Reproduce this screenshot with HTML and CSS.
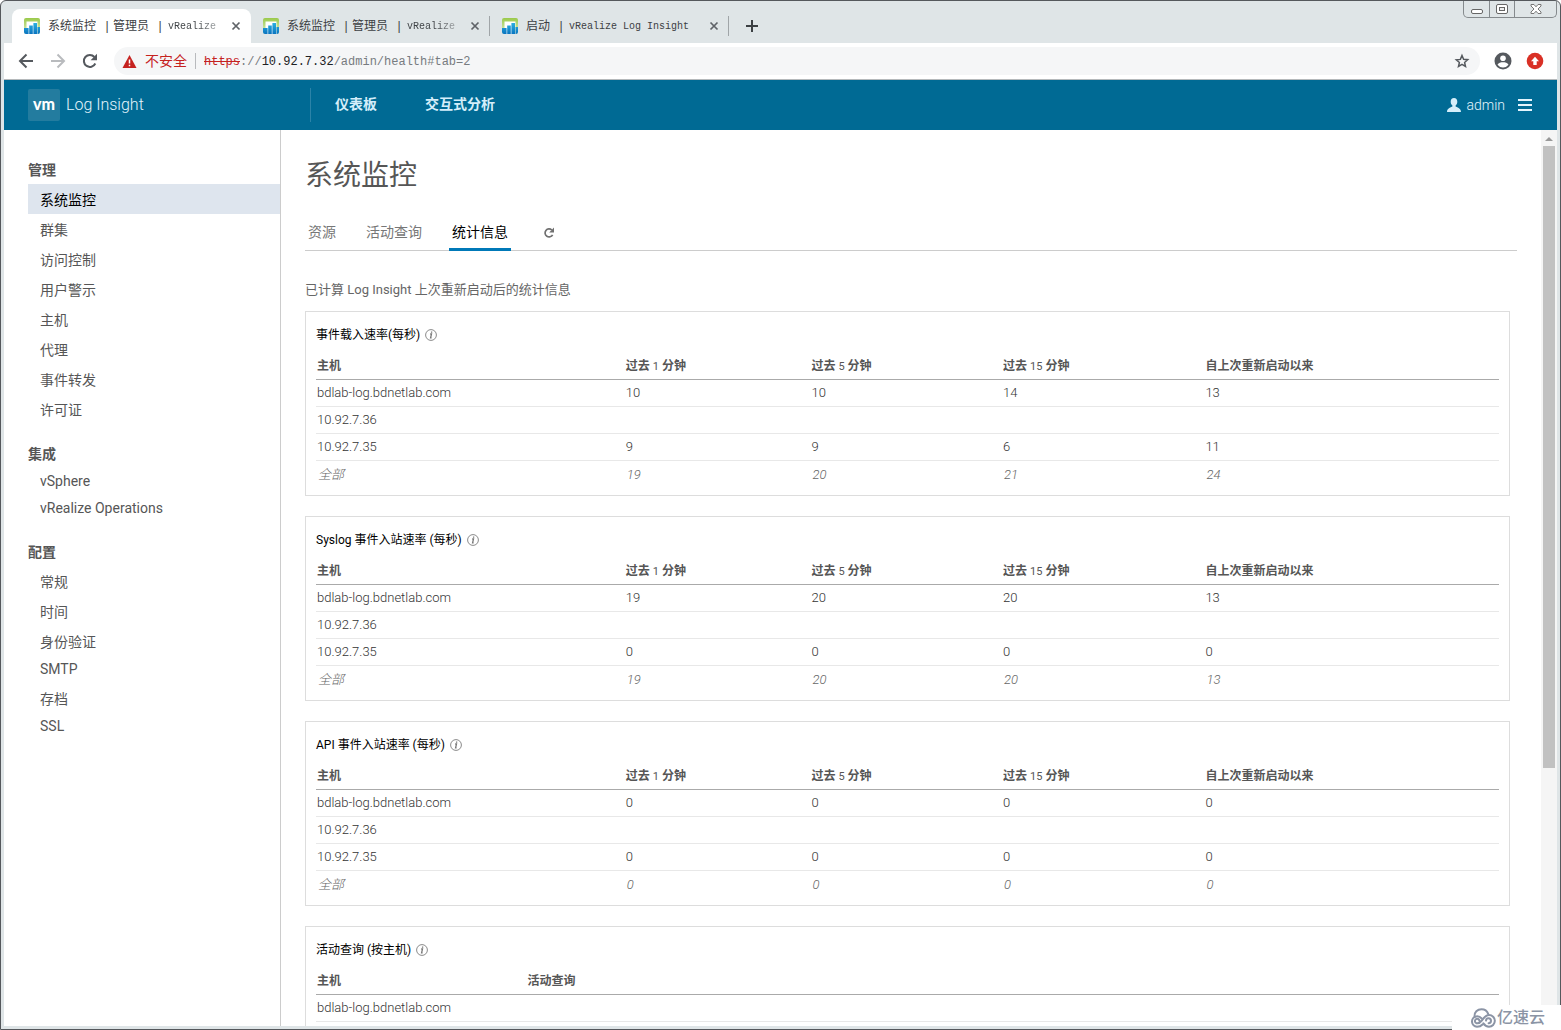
FILE: index.html
```html
<!DOCTYPE html>
<html lang="zh-CN">
<head>
<meta charset="utf-8">
<title>系统监控 | 管理员 | vRealize Log Insight</title>
<link rel="stylesheet" href="styles.css">
</head>
<body>
<svg class="defs" aria-hidden="true">
  <defs>
    <linearGradient id="green" x1="0" y1="0" x2="0" y2="1"><stop offset="0" stop-color="#9ac94a"/><stop offset="1" stop-color="#e3f0cc"/></linearGradient>
    <linearGradient id="blue" x1="0" y1="0" x2="0" y2="1"><stop offset="0" stop-color="#2bb0e0"/><stop offset="1" stop-color="#0a74c0"/></linearGradient>
    <symbol id="favicon" viewBox="0 0 16 16">
      <rect x="0" y="0" width="16" height="16" rx="2" fill="url(#green)"/>
      <path d="M2.500 3.500h11V16h-11z" fill="#fff"/>
      <path d="M0 10h4.600v6H2a2 2 0 0 1-2-2zM5.200 7.500h3.600V16H5.200zM9.400 5h3.600v11H9.400zM13.500 9H16v5a2 2 0 0 1-2 2h-.5z" fill="url(#blue)"/>
    </symbol>
    <symbol id="close" viewBox="0 0 10 10"><path d="M1.500 1.500l7 7M8.500 1.500l-7 7" stroke="#5f6368" stroke-width="1.700" fill="none"/></symbol>
    <symbol id="info" viewBox="0 0 12 12">
      <circle cx="6" cy="6" r="5.400" fill="none" stroke="#8a8a8a"/>
      <path d="M5.200 5h1.300l-.9 3.800h1M6.600 2.600v1.200" fill="none" stroke="#777" stroke-width="1.300"/>
    </symbol>
  </defs>
</svg>
<div class="window">
  <div class="tabstrip">
    <div class="tab active"><svg class="fav"><use href="#favicon"/></svg><span class="tab-title">系统监控<i>|</i>管理员<i>|</i><b>vRealize</b></span><button class="tab-close" aria-label="关闭"><svg><use href="#close"/></svg></button></div>
    <div class="tab"><svg class="fav"><use href="#favicon"/></svg><span class="tab-title">系统监控<i>|</i>管理员<i>|</i><b>vRealize</b></span><button class="tab-close" aria-label="关闭"><svg><use href="#close"/></svg></button></div>
    <div class="tab"><svg class="fav"><use href="#favicon"/></svg><span class="tab-title">启动<i>|</i><b class="full">vRealize Log Insight</b></span><button class="tab-close" aria-label="关闭"><svg><use href="#close"/></svg></button></div>
    <button class="new-tab" aria-label="新标签页"><svg viewBox="0 0 12 12"><path d="M6 0v12M0 6h12" stroke="#3c4043" stroke-width="2"/></svg></button>
    <div class="controls">
      <button class="ctl" aria-label="最小化"><svg viewBox="0 0 24 16"><rect x="6.500" y="8.500" width="11" height="4" rx="1.500" fill="#fff" stroke="#666"/></svg></button>
      <button class="ctl" aria-label="最大化"><svg viewBox="0 0 24 16"><rect x="6.500" y="3.500" width="11" height="9" rx="1.500" fill="#fff" stroke="#666"/><rect x="9.500" y="6.500" width="5" height="3" fill="#eee" stroke="#666"/></svg></button>
      <button class="ctl wide" aria-label="关闭窗口"><svg viewBox="0 0 24 16"><path d="M7 3.500h3l2 2.300 2-2.300h3v1.500L14 8l3 3v1.500h-3l-2-2.300-2 2.300H7V11l3-3-3-3z" fill="#fff" stroke="#777"/></svg></button>
    </div>
  </div>
  <div class="toolbar">
    <button class="tool" aria-label="后退"><svg viewBox="0 0 16 16"><path d="M15 8H2M8.500 1.500L2 8l6.500 6.500" fill="none" stroke="#55595e" stroke-width="2"/></svg></button>
    <button class="tool" aria-label="前进"><svg viewBox="0 0 16 16"><path d="M1 8h13M7.500 1.500L14 8l-6.500 6.500" fill="none" stroke="#b9bbbe" stroke-width="2"/></svg></button>
    <button class="tool" aria-label="刷新"><svg viewBox="0 0 16 16"><path d="M13.300 10.500A6 6 0 1 1 12.400 4" fill="none" stroke="#55595e" stroke-width="2"/><path d="M15 .8v6.400H8.600z" fill="#55595e"/></svg></button>
    <div class="address">
      <svg class="warn" viewBox="0 0 14 13"><path d="M7 0l7 13H0z" fill="#c5221f"/><path d="M7 4.500v4M7 9.700v1.600" stroke="#fff" stroke-width="1.500"/></svg>
      <span class="unsafe">不安全</span>
      <span class="url"><s>https</s>://<strong>10.92.7.32</strong>/admin/health#tab=2</span>
      <button class="star" aria-label="收藏"><svg viewBox="0 0 16 16"><path d="M8 2.500l1.600 3.800 4.100.4-3.100 2.700.9 4L8 11.400l-3.500 2.100.9-4-3.100-2.700 4.100-.4z" fill="none" stroke="#55595e" stroke-width="1.500"/></svg></button>
    </div>
    <div class="profile">
      <button aria-label="用户"><svg viewBox="0 0 18 18"><circle cx="9" cy="9" r="8.500" fill="#55595e"/><circle cx="9" cy="6.300" r="2.800" fill="#fff"/><path d="M3.500 12.800c1-2 3.300-2.600 5.500-2.600s4.500.6 5.500 2.600A6.700 6.700 0 0 1 9 15.500a6.700 6.700 0 0 1-5.500-2.700z" fill="#fff"/></svg></button>
      <button aria-label="更新"><svg viewBox="0 0 18 18"><circle cx="9" cy="9" r="8.300" fill="#d93025"/><path d="M9 4.800l4 4.400h-2.300V13H7.300V9.200H5z" fill="#fff"/></svg></button>
    </div>
  </div>
  <header class="app-header">
    <a class="brand" href="#"><span class="vm">vm</span><span>Log Insight</span></a>
    <nav class="top-nav"><a href="#">仪表板</a><a href="#">交互式分析</a></nav>
    <a class="user" href="#"><svg viewBox="0 0 14 14"><path d="M7 0c2.200 0 3.300 1.600 3.300 3.700 0 1.700-.7 3-1.700 3.700v1.200c1 .8 5.400 1.400 5.400 5.400H0c0-4 4.400-4.600 5.400-5.400V7.400c-1-.7-1.700-2-1.700-3.700C3.700 1.600 4.800 0 7 0z" fill="#d5eefa"/></svg><span>admin</span></a>
    <button class="menu" aria-label="菜单"><svg viewBox="0 0 14 12"><path d="M0 1h14M0 6h14M0 11h14" stroke="#e4f5fd" stroke-width="2"/></svg></button>
  </header>
  <div class="workspace">
    <aside class="sidebar">
      <h2>管理</h2>
      <ul>
        <li><a class="current" href="#">系统监控</a></li><li><a href="#">群集</a></li><li><a href="#">访问控制</a></li><li><a href="#">用户警示</a></li><li><a href="#">主机</a></li><li><a href="#">代理</a></li><li><a href="#">事件转发</a></li><li><a href="#">许可证</a></li>
      </ul>
      <h2>集成</h2>
      <ul>
        <li><a class="latin" href="#">vSphere</a></li><li><a class="latin" href="#">vRealize Operations</a></li>
      </ul>
      <h2>配置</h2>
      <ul>
        <li><a href="#">常规</a></li><li><a href="#">时间</a></li><li><a href="#">身份验证</a></li><li><a class="latin" href="#">SMTP</a></li><li><a href="#">存档</a></li><li><a class="latin" href="#">SSL</a></li>
      </ul>
    </aside>
    <main class="main">
      <h1>系统监控</h1>
      <nav class="page-tabs">
        <a href="#">资源</a><a href="#">活动查询</a><a class="current" href="#">统计信息</a>
        <button aria-label="刷新"><svg viewBox="0 0 12 12"><path d="M9.600 7.800A4 4 0 1 1 8.800 3" fill="none" stroke="#707070" stroke-width="1.700"/><path d="M11 .6v4.800H6.200z" fill="#707070"/></svg></button>
      </nav>
      <p class="intro">已计算 Log Insight 上次重新启动后的统计信息</p>

      <section class="card">
        <h3>事件载入速率(每秒) <svg><use href="#info"/></svg></h3>
        <table class="rates">
          <thead><tr><th>主机</th><th>过去 <em>1</em> 分钟</th><th>过去 <em>5</em> 分钟</th><th>过去 <em>15</em> 分钟</th><th>自上次重新启动以来</th></tr></thead>
          <tbody>
            <tr><td>bdlab-log.bdnetlab.com</td><td>10</td><td>10</td><td>14</td><td>13</td></tr>
            <tr><td>10.92.7.36</td><td></td><td></td><td></td><td></td></tr>
            <tr><td>10.92.7.35</td><td>9</td><td>9</td><td>6</td><td>11</td></tr>
          </tbody>
          <tfoot><tr><td>全部</td><td>19</td><td>20</td><td>21</td><td>24</td></tr></tfoot>
        </table>
      </section>

      <section class="card">
        <h3>Syslog 事件入站速率 (每秒) <svg><use href="#info"/></svg></h3>
        <table class="rates">
          <thead><tr><th>主机</th><th>过去 <em>1</em> 分钟</th><th>过去 <em>5</em> 分钟</th><th>过去 <em>15</em> 分钟</th><th>自上次重新启动以来</th></tr></thead>
          <tbody>
            <tr><td>bdlab-log.bdnetlab.com</td><td>19</td><td>20</td><td>20</td><td>13</td></tr>
            <tr><td>10.92.7.36</td><td></td><td></td><td></td><td></td></tr>
            <tr><td>10.92.7.35</td><td>0</td><td>0</td><td>0</td><td>0</td></tr>
          </tbody>
          <tfoot><tr><td>全部</td><td>19</td><td>20</td><td>20</td><td>13</td></tr></tfoot>
        </table>
      </section>

      <section class="card">
        <h3>API 事件入站速率 (每秒) <svg><use href="#info"/></svg></h3>
        <table class="rates">
          <thead><tr><th>主机</th><th>过去 <em>1</em> 分钟</th><th>过去 <em>5</em> 分钟</th><th>过去 <em>15</em> 分钟</th><th>自上次重新启动以来</th></tr></thead>
          <tbody>
            <tr><td>bdlab-log.bdnetlab.com</td><td>0</td><td>0</td><td>0</td><td>0</td></tr>
            <tr><td>10.92.7.36</td><td></td><td></td><td></td><td></td></tr>
            <tr><td>10.92.7.35</td><td>0</td><td>0</td><td>0</td><td>0</td></tr>
          </tbody>
          <tfoot><tr><td>全部</td><td>0</td><td>0</td><td>0</td><td>0</td></tr></tfoot>
        </table>
      </section>

      <section class="card">
        <h3>活动查询 (按主机) <svg><use href="#info"/></svg></h3>
        <table class="queries">
          <thead><tr><th>主机</th><th>活动查询</th></tr></thead>
          <tbody>
            <tr><td>bdlab-log.bdnetlab.com</td><td></td></tr>
            <tr><td></td><td></td></tr>
          </tbody>
        </table>
      </section>
    </main>
    <div class="scrollbar"><div class="arrow"></div><div class="thumb"></div></div>
  </div>
</div>
<div class="watermark"><svg viewBox="0 0 26 20"><g fill="none" stroke="#8b94a5" stroke-width="2" stroke-linecap="round"><path d="M4.500 8.500C4 4 7.500 1.200 11.500 1.200c3.300 0 5.600 1.600 6.700 4.600"/><path d="M9.500 12.800a2.300 2.300 0 1 0-3.200 2.400c2.300.7 4-.7 5.700-2.900 1.800-2.400 3.600-5.300 7-5.300a5.800 5.800 0 0 1 0 11.700c-3 0-4.300-1.300-5.600-3.300"/><path d="M16 12.600a2.500 2.500 0 1 1 2.600 2.600"/><path d="M12.500 16.500c-1.500 1.600-3.200 2.200-5.500 2.200a5.200 5.200 0 0 1-.8-10.300c2.500-.4 4.300.6 5.800 2.400"/></g></svg><span>亿速云</span></div>
</body>
</html>
```
FILE: styles.css
```css
* { box-sizing: border-box; }

body {
  margin: 0;
  height: 100vh;
  overflow: hidden;
  background: #fff;
  color: #565656;
  font: 14px/20px Roboto, "Noto Sans CJK SC", sans-serif;
}

button {
  display: flex;
  align-items: center;
  justify-content: center;
  padding: 0;
  border: 0;
  background: none;
}

a { color: inherit; text-decoration: none; }
svg { display: block; flex: none; }
.defs { position: absolute; width: 0; height: 0; }

/* Browser window */
.window {
  display: flex;
  flex-direction: column;
  height: 100vh;
  padding: 0 3px 3px;
  border: 1px solid #55585c;
  border-radius: 6px 6px 0 0;
  background: #dfe5e7;
}

.tabstrip {
  display: flex;
  flex: none;
  height: 42px;
  padding-left: 8px;
  font: 12px/16px "Liberation Mono", "Noto Sans CJK SC", monospace;
  color: #3c4043;
}

.tab {
  display: flex;
  align-items: center;
  width: 239px;
  height: 34px;
  margin-top: 8px;
  padding: 0 10px 0 12px;
}

.tab.active { background: #fff; border-radius: 8px 8px 0 0; }
.tab:nth-child(2), .tab:nth-child(3) {
  background: linear-gradient(#a0a5a8, #a0a5a8) right 7px / 1px 20px no-repeat;
}
.fav { width: 16px; height: 16px; margin-right: 8px; }

.tab-title {
  display: flex;
  flex: 1;
  align-items: center;
  padding-top: 2px;
  white-space: nowrap;
}

.tab-title i { width: 10px; margin: 0 1px 0 6px; font-style: normal; text-align: center; }
.tab-title b {
  margin-left: 2px;
  font-size: 10px;
  font-weight: 400;
  background: linear-gradient(90deg, #3c4043 60%, #a0a4a6);
  background-clip: text;
  color: transparent;
}
.tab-title .full { background: none; color: #3c4043; }
.tab-close svg { width: 10px; height: 10px; }
.new-tab { width: 46px; height: 34px; margin-top: 8px; }
.new-tab svg { width: 12px; height: 12px; }

.controls {
  display: flex;
  height: 17px;
  margin-left: auto;
  border: 1px solid #858a8d;
  border-top: 0;
  border-radius: 0 0 5px 5px;
}

.ctl { width: 25px; }
.ctl + .ctl { border-left: 1px solid #858a8d; }
.ctl.wide { width: 42px; }
.ctl svg { width: 24px; height: 16px; }

.toolbar {
  display: flex;
  flex: none;
  align-items: center;
  height: 37px;
  padding: 0 10px 0 6px;
  border-bottom: 1px solid #b5b9bb;
  background: #fff;
}

.tool { width: 32px; height: 28px; }
.tool svg { width: 16px; height: 16px; }

.address {
  display: flex;
  flex: 1;
  align-items: center;
  height: 28px;
  margin: 0 11px 0 8px;
  padding: 0 10px 0 8px;
  border-radius: 14px;
  background: #f5f6f7;
}

.warn { width: 15px; height: 13px; margin-right: 8px; }
.unsafe {
  padding-right: 8px;
  border-right: 1px solid #b8babd;
  color: #c5221f;
  line-height: 16px;
}
.url {
  flex: 1;
  margin-left: 8px;
  padding-top: 2px;
  color: #777b80;
  font: 12px/16px "Liberation Mono", monospace;
}
.url s { color: #c5221f; }
.url strong { font-weight: 400; color: #202124; }
.star svg { width: 16px; height: 16px; }
.profile { display: flex; gap: 8px; }
.profile button { width: 24px; height: 24px; }
.profile svg { width: 18px; height: 18px; }

/* Application header */
.app-header {
  display: flex;
  flex: none;
  align-items: center;
  height: 50px;
  padding: 0 25px 0 24px;
  background: #006a94;
  color: #e4f5fd;
}

.brand {
  display: flex;
  align-items: center;
  gap: 6px;
  width: 283px;
  height: 34px;
  border-right: 1px solid #2b83a8;
  font-size: 16px;
  font-weight: 300;
}

.vm {
  width: 32px;
  height: 32px;
  border-radius: 2px;
  background: #237c9f;
  color: #fff;
  font: 900 16px/30px Lato, sans-serif;
  text-align: center;
}

.top-nav {
  display: flex;
  flex: 1;
  gap: 48px;
  padding: 0 0 2px 24px;
  font-weight: 700;
  color: #d5eefa;
}
.user { display: flex; align-items: center; gap: 5px; font-weight: 300; }
.user svg { width: 14px; height: 14px; }
.menu { margin-left: 13px; }
.menu svg { width: 14px; height: 12px; }

.workspace { display: flex; flex: 1; min-height: 0; background: #fff; }

/* Side navigation */
.sidebar {
  flex: none;
  width: 277px;
  padding: 26px 0 0 24px;
  border-right: 1px solid #ccc;
}

.sidebar h2 { margin: 0; font-size: 14px; font-weight: 700; line-height: 28px; }
.sidebar ul { margin: 0 0 16px; padding: 0; list-style: none; }
.sidebar li a { display: block; padding: 2px 0 0 12px; line-height: 28px; }
.sidebar li .latin { padding-top: 0; line-height: 27px; }
.sidebar li .current { background: #dee5ee; color: #000; }

/* Page content */
.main { flex: 1; min-width: 0; padding: 24px 24px 0; overflow: hidden; }
.main h1 { margin: 0; font-size: 28px; font-weight: 400; line-height: 44px; }

.page-tabs {
  display: flex;
  gap: 24px;
  height: 39px;
  margin-top: 14px;
  border-bottom: 1px solid #ccc;
  color: #777;
}

.page-tabs a { height: 39px; padding: 0 3px; line-height: 40px; }
.page-tabs .current { border-bottom: 3px solid #0079b8; color: #000; }
.page-tabs button { width: 28px; padding-top: 4px; }
.page-tabs svg { width: 12px; height: 12px; }

.intro { margin: 29px 0 11px; font-size: 13px; line-height: 20px; color: #666; }

.card {
  margin: 0 7px 20px 0;
  padding: 0 10px 6px;
  border: 1px solid #ddd;
}

.card h3 {
  display: flex;
  align-items: center;
  gap: 5px;
  height: 40px;
  margin: 0;
  padding-top: 6px;
  color: #000;
  font-size: 12px;
  font-weight: 400;
}

.card h3 svg { width: 12px; height: 12px; }

table {
  width: 100%;
  table-layout: fixed;
  border-collapse: separate;
  border-spacing: 0;
}

th, td { padding: 0 1px; text-align: left; line-height: 26px; }
th { height: 28px; border-bottom: 1px solid #aaa; font-size: 12px; font-weight: 700; vertical-align: bottom; }
th em { font-style: normal; font-weight: 400; font-size: 11px; line-height: 20px; }
td { height: 27px; border-bottom: 1px solid #e8e8e8; font-size: 13px; font-weight: 300; color: #333; }
tfoot td { height: 28px; padding-left: 2px; border-bottom: 0; color: #666; font-style: italic; }

.rates th:nth-child(1) { width: 26.1%; }
.rates th:nth-child(2) { width: 15.7%; }
.rates th:nth-child(3) { width: 16.2%; }
.rates th:nth-child(4) { width: 17.1%; }
.queries th:first-child { width: 17.8%; }

.scrollbar { flex: none; width: 16px; padding: 7px 2px 0; background: #f5f5f5; }
.arrow {
  width: 0;
  margin: 0 auto 5px;
  border: 4px solid transparent;
  border-top: 0;
  border-bottom-color: #999;
}
.thumb { height: 70%; background: #c1c1c1; }

/* Site mark laid over the window's corner */
.watermark {
  position: absolute;
  right: 0;
  bottom: 0;
  display: flex;
  align-items: center;
  gap: 1px;
  width: 109px;
  height: 25px;
  padding-left: 18px;
  background: #fff;
  color: #8b94a5;
  font-size: 16px;
  font-weight: 500;
  white-space: nowrap;
}
.watermark svg { width: 26px; height: 20px; }
```
